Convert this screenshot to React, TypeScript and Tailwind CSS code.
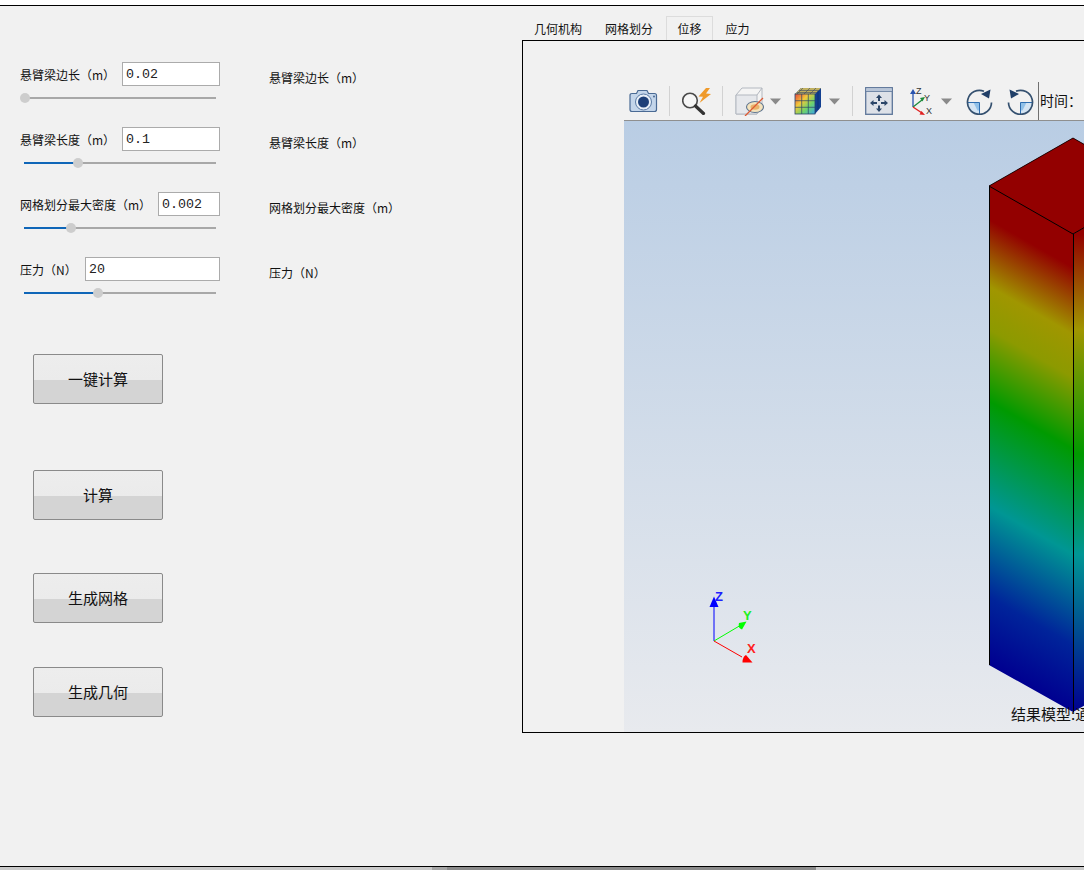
import React from 'react';

const cjk = { fontFamily: '"Noto Sans CJK SC", "Liberation Sans", sans-serif' };

const params = [
  { label: '悬臂梁边长（m）', value: '0.02', inputW: 'w-[98px]', thumb: 1 },
  { label: '悬臂梁长度（m）', value: '0.1', inputW: 'w-[98px]', thumb: 54 },
  { label: '网格划分最大密度（m）', value: '0.002', inputW: 'w-[62px]', thumb: 47 },
  { label: '压力（N）', value: '20', inputW: 'w-[135px]', thumb: 74 },
];

const buttons = [
  { label: '一键计算', mt: 'mt-[60px]' },
  { label: '计算', mt: 'mt-[66px]' },
  { label: '生成网格', mt: 'mt-[53px]' },
  { label: '生成几何', mt: 'mt-[44px]' },
];

const tabs = [
  { label: '几何机构', w: 'w-[72px]' },
  { label: '网格划分', w: 'w-[72px] pr-[2px]' },
  { label: '位移', w: 'w-[47px]', active: true },
  { label: '应力', w: 'w-[49px]' },
];

function Slider({ thumb }: { thumb: number }) {
  return (
    <div className="relative ml-[4px] mt-[11px] h-[2px] w-[192px] bg-[#a8a8a8]">
      <div className="absolute left-0 top-0 h-[2px] bg-[#0f66b8]" style={{ width: thumb }} />
      <div
        className="absolute top-[-4px] h-[10px] w-[10px] rounded-full bg-[#cdcdcd]"
        style={{ left: thumb - 5 }}
      />
    </div>
  );
}

function ParamRow({ label, value, inputW, thumb }: (typeof params)[number]) {
  return (
    <div className="mb-[28px] ml-[20px] flex">
      <div className="w-[200px]">
        <div className="flex h-[24px] items-center justify-between">
          <span className="whitespace-nowrap pt-[1px] text-[12px] text-[#111]">{label}</span>
          <div
            className={`${inputW} flex h-[24px] items-center border border-[#ababab] bg-white pl-[3px] pt-[2px] text-[13.3px] text-[#222]`}
            style={{ fontFamily: '"Liberation Mono", monospace' }}
          >
            {value}
          </div>
        </div>
        <Slider thumb={thumb} />
      </div>
      <span className="ml-[49px] whitespace-nowrap pt-[7px] text-[12px] leading-[18px] text-[#111]">{label}</span>
    </div>
  );
}

function PushButton({ label, mt }: { label: string; mt: string }) {
  return (
    <div
      className={`${mt} relative ml-[33px] flex h-[50px] w-[130px] items-center justify-center rounded-[2px] border border-[#8a8a8a] bg-[linear-gradient(to_bottom,#ededed_0px,#ebebeb_25px,#d4d4d4_25px,#d4d4d4_100%)] text-[15px] text-[#111]`}
    >
      {label}
    </div>
  );
}

function Separator() {
  return <div className="h-[30px] w-[1px] bg-[#d2d2d2]" />;
}

function DropArrow() {
  return (
    <svg width="11" height="7" viewBox="0 0 11 7">
      <path d="M0 0.5h11L5.5 6.5z" fill="#8a8a8a" />
    </svg>
  );
}

function CameraIcon() {
  return (
    <svg width="29" height="26" viewBox="0 0 29 26">
      <path d="M1 7.5q0-2 2-2h4.5l1.5-3h9l1.5 3h6q2 0 2 2v14q0 2-2 2h-22.500q-2 0-2-2z" fill="#c3d5ea" stroke="#4a6a94" strokeWidth="1.2" />
      <circle cx="14.500" cy="14" r="8" fill="#e8eff7" stroke="#5a7aa4" />
      <circle cx="14.500" cy="14" r="5.500" fill="#1d3f78" />
      <circle cx="25" cy="8.500" r="0.9" fill="#3d5d88" />
    </svg>
  );
}

function SearchBoltIcon() {
  return (
    <svg width="30" height="28" viewBox="0 0 30 28">
      <circle cx="8" cy="13.500" r="7.300" fill="#f6f6f6" stroke="#4a4a4a" strokeWidth="1.6" />
      <path d="M13.500 19l8 7.500" stroke="#333" strokeWidth="3.200" strokeLinecap="round" />
      <path d="M24 1L16.500 9.500l4.500 0.300-3.500 6.200L29 7l-5-0.500 4-5.500z" fill="#ef9a2b" />
    </svg>
  );
}

function CubeSliceIcon() {
  return (
    <svg width="30" height="30" viewBox="0 0 30 30">
      <path d="M1 9l6-7h20v19l-5 7H1z" fill="#f4f4f4" stroke="#b3b8c0" />
      <path d="M1 9h21v19H1z" fill="#e6e8ec" stroke="#b3b8c0" />
      <path d="M22 9l5-7" stroke="#b3b8c0" />
      <ellipse cx="20" cy="21" rx="8.500" ry="5.500" fill="#f4e3bd" stroke="#5d7590" strokeWidth="1.100" />
      <ellipse cx="20" cy="21" rx="4.500" ry="2.800" fill="#eab36a" />
      <path d="M28 12L10 30" stroke="#dd5a33" strokeWidth="1.300" />
    </svg>
  );
}

function ColorCubeIcon() {
  return (
    <svg width="28" height="28" viewBox="0 0 28 28">
      <defs>
        <linearGradient id="cubeFront" x1="0" y1="0" x2="1" y2="1">
          <stop offset="0" stopColor="#e8483a" />
          <stop offset="0.35" stopColor="#f2c83a" />
          <stop offset="0.65" stopColor="#6fd36a" />
          <stop offset="1" stopColor="#3aa6e6" />
        </linearGradient>
      </defs>
      <path d="M1 7l6-6h20v19l-6 7z" fill="#123f90" />
      <path d="M1 7l6-6h20l-6 6z" fill="#c0b060" />
      <path d="M9 1L3 7M16 1l-6 6M22 1l-6 6M5 3.500h20M3 5.500h20" stroke="#3a4a60" strokeWidth="0.6" fill="none" />
      <rect x="1" y="7" width="20" height="20" fill="url(#cubeFront)" stroke="#2a4468" strokeWidth="0.8" />
      <path d="M7.700 7v20M14.300 7v20M1 13.700h20M1 20.300h20" stroke="#2a4468" strokeWidth="0.7" />
      <path d="M24 4v19" stroke="#0a2a66" strokeWidth="0.6" />
    </svg>
  );
}

function FitIcon() {
  return (
    <svg width="28" height="28" viewBox="0 0 28 28">
      <rect x="0.700" y="0.700" width="26.600" height="26.600" fill="#dde1e8" stroke="#5d7699" strokeWidth="1.300" />
      <rect x="1.300" y="1.300" width="25.400" height="3.200" fill="#b8c5d8" />
      <path d="M1 4.500h26" stroke="#5d7699" strokeWidth="0.8" />
      <path d="M14 7.500l-3 3.500h2v3h2v-3h2zM14 25l-3-3.500h2v-3h2v3h2zM5 16l3.500-3v2h3.500v2h-3.500v2zM23 16l-3.500-3v2H16v2h3.500v2z" fill="#2b4568" />
    </svg>
  );
}

function AxesIcon() {
  return (
    <svg width="24" height="30" viewBox="0 0 24 30">
      <path d="M3 21V7" stroke="#2a54b0" strokeWidth="1.300" />
      <path d="M3 3l-3 5h6z" fill="#2a54b0" />
      <path d="M3 21l9-7" stroke="#1d8a3a" strokeWidth="1.300" />
      <path d="M15 11l-5 1 2.500 3.500z" fill="#1d8a3a" />
      <path d="M3 21l9 6" stroke="#e02020" strokeWidth="1.300" />
      <path d="M15 29l-5.500-0.500 2-3.500z" fill="#e02020" />
      <text x="6" y="8" fontSize="9" fill="#333" fontFamily="Liberation Sans">Z</text>
      <text x="14" y="15" fontSize="9" fill="#333" fontFamily="Liberation Sans">Y</text>
      <text x="16" y="28" fontSize="9" fill="#333" fontFamily="Liberation Sans">X</text>
    </svg>
  );
}

function RotateIcon({ flip }: { flip?: boolean }) {
  return (
    <svg width="27" height="27" viewBox="0 0 27 27" className={flip ? '-scale-x-100' : ''}>
      <path d="M13.500 14.500H1.500A12 12 0 0 0 13.500 26.500z" fill="#d3e4f3" />
      <path d="M7.500 14.500h6v8h-2z" fill="#8fc0e8" />
      <path d="M1.500 14.500h12v12" stroke="#2d6db0" strokeWidth="1" fill="none" />
      <path d="M18 3.200A12 12 0 1 0 25.500 14.500" fill="none" stroke="#34506f" strokeWidth="1.700" />
      <path d="M24.500 1.500l-1.500 9-8-4.500z" fill="#203f68" />
    </svg>
  );
}

function Toolbar() {
  return (
    <div className="flex h-[39px] items-center overflow-hidden border-b border-[#8f8f8f] bg-[#f1f1f1]">
      <div className="ml-[5px] flex"><CameraIcon /></div>
      <div className="ml-[11px]"><Separator /></div>
      <div className="ml-[12px] flex"><SearchBoltIcon /></div>
      <div className="ml-[10px]"><Separator /></div>
      <div className="ml-[12px] flex"><CubeSliceIcon /></div>
      <div className="ml-[5px] flex"><DropArrow /></div>
      <div className="ml-[13px] flex"><ColorCubeIcon /></div>
      <div className="ml-[7px] flex"><DropArrow /></div>
      <div className="ml-[12px]"><Separator /></div>
      <div className="ml-[12px] flex"><FitIcon /></div>
      <div className="ml-[17px] flex"><AxesIcon /></div>
      <div className="ml-[7px] flex"><DropArrow /></div>
      <div className="ml-[14px] flex"><RotateIcon /></div>
      <div className="ml-[14px] flex"><RotateIcon flip /></div>
      <div className="ml-[4px] h-[38px] w-[1px] shrink-0 bg-[#707070]" />
      <span className="ml-[1px] whitespace-nowrap pb-[1px] text-[14px] text-[#111]">时间：</span>
    </div>
  );
}

// coloured beam, coordinates are relative to the 3D view (x-624, y-121)
function Scene() {
  return (
    <svg width="460" height="611" viewBox="0 0 460 611" className="absolute left-0 top-0">
      <defs>
        <linearGradient id="leftFace" gradientUnits="userSpaceOnUse" x1="407" y1="89" x2="201" y2="449">
          <stop offset="0" stopColor="#930000" />
          <stop offset="0.07" stopColor="#930000" />
          <stop offset="0.21" stopColor="#a09600" />
          <stop offset="0.3" stopColor="#8c9a00" />
          <stop offset="0.45" stopColor="#009a00" />
          <stop offset="0.67" stopColor="#009694" />
          <stop offset="0.86" stopColor="#00249a" />
          <stop offset="1" stopColor="#000090" />
        </linearGradient>
        <linearGradient id="rightFace" gradientUnits="userSpaceOnUse" x1="449" y1="113" x2="449" y2="591">
          <stop offset="0" stopColor="#930000" />
          <stop offset="0.2" stopColor="#a09600" />
          <stop offset="0.46" stopColor="#009a00" />
          <stop offset="0.67" stopColor="#009694" />
          <stop offset="1" stopColor="#000090" />
        </linearGradient>
      </defs>
      <path d="M365 65L449 17L470 29V101L449 113V591L365 544z" fill="url(#leftFace)" />
      <path d="M449 113L470 101V579L449 591z" fill="url(#rightFace)" />
      <path d="M365 65L449 17L470 29V101L449 113z" fill="#930000" />
      <path d="M365 65L449 17L470 29" fill="none" stroke="#000" strokeWidth="0.8" />
      <path d="M365 65L449 113L470 101" fill="none" stroke="#000" strokeWidth="1" />
      <path d="M365.500 65V544M449.500 113V591" fill="none" stroke="#000" strokeWidth="1" />
      {/* triad */}
      <path d="M90 520V484" stroke="#0000ff" strokeWidth="1" />
      <path d="M90 475.500l-4.500 10.500h9z" fill="#0000ff" />
      <path d="M90 520L117 504" stroke="#00ff00" strokeWidth="1" />
      <path d="M122.500 500.500l-7.500 1.500q-1.500 5 3 6.500z" fill="#00ff00" />
      <path d="M90 520L118 536" stroke="#ff0000" strokeWidth="1" />
      <path d="M128.500 541.500l-10 0q0-6 3.500-7.500z" fill="#ff0000" />
      <text x="91" y="480" fontSize="13" fontWeight="700" fill="#2020ff" fontFamily="Liberation Sans">Z</text>
      <text x="119" y="499" fontSize="13" fontWeight="700" fill="#20f020" fontFamily="Liberation Sans">Y</text>
      <text x="123" y="532" fontSize="13" fontWeight="700" fill="#ff2020" fontFamily="Liberation Sans">X</text>
    </svg>
  );
}

export default function App() {
  return (
    <div className="flex h-[870px] w-[1084px] flex-col overflow-hidden bg-[#f1f1f1]" style={cjk}>
      <div className="h-[6px] shrink-0 border-b border-black bg-white" />
      <div className="flex min-h-0 flex-1">
        <div className="w-[522px] shrink-0 pt-[56px]">
          {params.map((p) => (
            <ParamRow key={p.label} {...p} />
          ))}
          {buttons.map((b) => (
            <PushButton key={b.label} label={b.label} mt={b.mt} />
          ))}
        </div>
        <div className="min-w-0 flex-1">
          <div className="flex h-[34px] items-end">
            {tabs.map((t) => (
              <div
                key={t.label}
                className={`${t.w} flex h-[24px] items-center justify-center border-x border-t pt-[1px] text-[12px] text-[#111] ${t.active ? 'border-[#dcdcdc]' : 'border-transparent'}`}
              >
                {t.label}
              </div>
            ))}
          </div>
          <div className="h-[693px] w-[600px] border border-black pl-[101px] pt-[41px]">
            <div className="w-[460px]">
              <Toolbar />
              <div className="relative h-[611px] overflow-hidden bg-[linear-gradient(to_bottom,#b9cde4,#e8eaee)]">
                <Scene />
                <span className="absolute left-[387px] top-[584px] whitespace-nowrap text-[15px] leading-[18px] text-[#111]">
                  结果模型:通
                </span>
              </div>
            </div>
          </div>
        </div>
      </div>
      <div className="flex h-[4px] shrink-0 border-t border-black bg-[#c9c9c9]">
        <div className="ml-[432px] h-[3px] w-[15px] bg-[#a5a5a5]" />
        <div className="h-[3px] w-[369px] bg-[#8a8a8a]" />
      </div>
    </div>
  );
}
